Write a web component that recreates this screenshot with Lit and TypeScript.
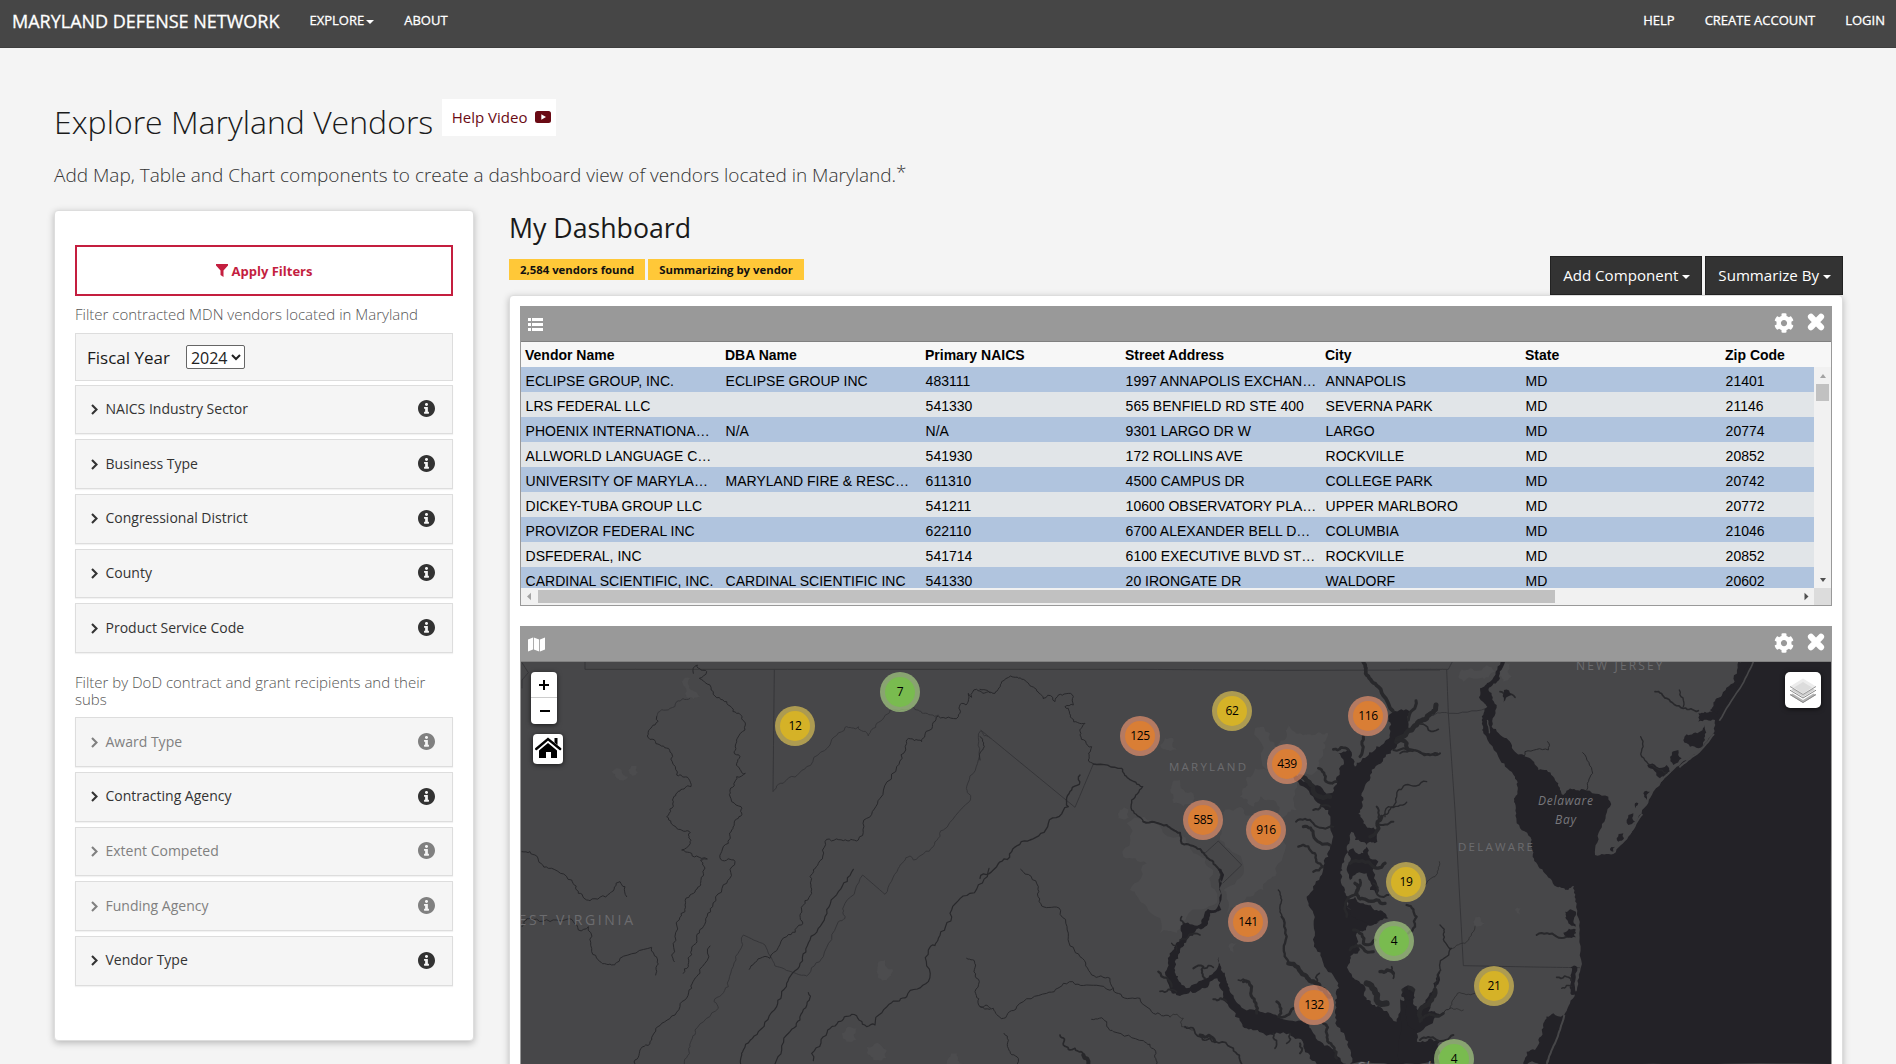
import { LitElement, html, svg, css } from "lit";
import { customElement, property } from "lit/decorators.js";
import { classMap } from "lit/directives/class-map.js";
import { styleMap } from "lit/directives/style-map.js";

type Pt = [number, number];

/** Parses "x,y x,y ..." into points. */
const parse = (s: string): Pt[] =>
  s.trim().split(/\s+/).map((p) => p.split(",").map(Number) as Pt);

/** Subdivides a polyline with small deterministic offsets, so rivers and shores look natural. */
function rough(src: string, amp: number, closed = false): string {
  let seed = 7;
  const rnd = () => {
    seed = (seed * 16807) % 2147483647;
    return seed / 2147483647 - 0.5;
  };
  let pts = parse(src);
  if (closed) pts.push(pts[0]);
  for (let pass = 0; pass < 3; pass++) {
    const out: Pt[] = [pts[0]];
    for (let i = 1; i < pts.length; i++) {
      const [ax, ay] = pts[i - 1];
      const [bx, by] = pts[i];
      const len = Math.hypot(bx - ax, by - ay);
      if (len > 9) {
        const k = rnd() * Math.min(amp, len * 0.55);
        out.push([(ax + bx) / 2 - ((by - ay) / len) * k, (ay + by) / 2 + ((bx - ax) / len) * k]);
      }
      out.push([bx, by]);
    }
    pts = out;
  }
  return "M" + pts.map((p) => `${p[0].toFixed(1)} ${p[1].toFixed(1)}`).join("L") + (closed ? "Z" : "");
}

const river = (s: string, w = 3, amp = 14) =>
  svg`<path class="river" d=${rough(s, amp)} stroke-width=${w}></path>`;
const border = (s: string, amp = 0) => svg`<path class="border" d=${rough(s, amp)}></path>`;
const water = (s: string, amp = 14) => svg`<path class="water" d=${rough(s, amp, true)}></path>`;
const urban = (s: string) => svg`<path class="urban" d=${rough(s, 50, true)}></path>`;
const land = (s: string, w = 5) => svg`<path class="land" d=${rough(s, 3)} stroke-width=${w}></path>`;

const icons = {
  cog: svg`<path d="M487.4 315.7l-42.6-24.6c4.3-23.2 4.3-47 0-70.2l42.6-24.6c4.9-2.8 7.1-8.6 5.5-14-11.1-35.6-30-67.8-54.7-94.6-3.8-4.1-10-5.1-14.8-2.3L380.8 110c-17.9-15.4-38.5-27.3-60.8-35.1V25.8c0-5.6-3.9-10.5-9.4-11.7-36.7-8.2-74.3-7.8-109.2 0-5.5 1.2-9.4 6.1-9.4 11.7V75c-22.2 7.9-42.8 19.8-60.8 35.1L88.7 85.5c-4.9-2.8-11-1.9-14.8 2.3-24.7 26.7-43.6 58.9-54.7 94.6-1.7 5.4.6 11.2 5.5 14L67.3 221c-4.3 23.2-4.3 47 0 70.2l-42.6 24.6c-4.9 2.8-7.1 8.6-5.5 14 11.1 35.6 30 67.8 54.7 94.6 3.8 4.1 10 5.1 14.8 2.3l42.6-24.6c17.9 15.4 38.5 27.3 60.8 35.1v49.2c0 5.6 3.9 10.5 9.4 11.7 36.7 8.2 74.3 7.8 109.2 0 5.5-1.2 9.4-6.1 9.4-11.7v-49.2c22.2-7.9 42.8-19.8 60.8-35.1l42.6 24.6c4.9 2.8 11 1.9 14.8-2.3 24.7-26.7 43.6-58.9 54.7-94.6 1.5-5.5-.7-11.3-5.6-14.1zM256 336c-44.1 0-80-35.9-80-80s35.9-80 80-80 80 35.9 80 80-35.9 80-80 80z"/>`,
  info: svg`<path d="M256 8C119.043 8 8 119.083 8 256c0 136.997 111.043 248 248 248s248-111.003 248-248C504 119.083 392.957 8 256 8zm0 90c26 0 44 18 44 42s-18 42-44 42-44-18-44-42 18-42 44-42zm72 296c0 7-5 12-12 12H196c-7 0-12-5-12-12v-32c0-7 5-12 12-12h20v-84h-20c-7 0-12-5-12-12v-32c0-7 5-12 12-12h88c7 0 12 5 12 12v128h20c7 0 12 5 12 12v32z"/>`,
};

const cogIcon = () => html`<svg class="cog" viewBox="0 0 512 512">${icons.cog}</svg>`;
const closeIcon = () => html`<svg class="close" viewBox="0 0 18 18">
  <path d="M4 3.8 14 14.2M14 3.8 4 14.2" stroke="#fff" stroke-width="6.200" stroke-linecap="round"></path>
</svg>`;

@customElement("filter-item")
class FilterItem extends LitElement {
  @property() label = "";
  @property({ type: Boolean }) off = false;

  static styles = css`
    :host { display: block; }
    .item {
      box-sizing: border-box; height: 49.7px; border: 1px solid #ddd; background: #f5f5f5;
      display: flex; align-items: center; padding: 0 17.5px 1px 15px; color: #333;
      font: 14px/20px "Open Sans", sans-serif; box-shadow: 0 1px 1px rgba(0, 0, 0, 0.05);
    }
    .off { color: #808080; }
    .chev { width: 7px; height: 11px; margin: 1px 8px 0 -0.5px; fill: none; stroke: currentColor; stroke-width: 2.1; }
    .label { flex: 1; }
    .info { width: 17px; height: 17px; fill: currentColor; }
  `;

  render() {
    return html`<div class=${classMap({ item: true, off: this.off })}>
      <svg class="chev" viewBox="0 0 7 11"><path d="M1 1 5.5 5.5 1 10"></path></svg>
      <span class="label">${this.label}</span>
      <svg class="info" viewBox="8 8 496 496">${icons.info}</svg>
    </div>`;
  }
}

const COLUMNS = ["Vendor Name", "DBA Name", "Primary NAICS", "Street Address", "City", "State", "Zip Code"];
const ROWS: string[][] = [
  ["ECLIPSE GROUP, INC.", "ECLIPSE GROUP INC", "483111", "1997 ANNAPOLIS EXCHAN…", "ANNAPOLIS", "MD", "21401"],
  ["LRS FEDERAL LLC", "", "541330", "565 BENFIELD RD STE 400", "SEVERNA PARK", "MD", "21146"],
  ["PHOENIX INTERNATIONA…", "N/A", "N/A", "9301 LARGO DR W", "LARGO", "MD", "20774"],
  ["ALLWORLD LANGUAGE C…", "", "541930", "172 ROLLINS AVE", "ROCKVILLE", "MD", "20852"],
  ["UNIVERSITY OF MARYLA…", "MARYLAND FIRE & RESC…", "611310", "4500 CAMPUS DR", "COLLEGE PARK", "MD", "20742"],
  ["DICKEY-TUBA GROUP LLC", "", "541211", "10600 OBSERVATORY PLA…", "UPPER MARLBORO", "MD", "20772"],
  ["PROVIZOR FEDERAL INC", "", "622110", "6700 ALEXANDER BELL D…", "COLUMBIA", "MD", "21046"],
  ["DSFEDERAL, INC", "", "541714", "6100 EXECUTIVE BLVD ST…", "ROCKVILLE", "MD", "20852"],
  ["CARDINAL SCIENTIFIC, INC.", "CARDINAL SCIENTIFIC INC", "541330", "20 IRONGATE DR", "WALDORF", "MD", "20602"],
];

@customElement("vendor-table")
class VendorTable extends LitElement {
  static styles = css`
    :host { display: block; font: 14px/25px "Liberation Sans", Arial, sans-serif; color: #000; }
    .row { display: grid; grid-template-columns: repeat(6, 200px) 1fr; height: 25px; padding-left: 4.6px; white-space: nowrap; }
    .head { background: #f7f7f7; font-weight: 700; padding-left: 4px; line-height: 27px; }
    .main { display: grid; grid-template-columns: 1fr 17px; grid-template-rows: 221px 17px; }
    .rows { overflow: hidden; }
    .rows .row { background: #e1e5e8; line-height: 29px; }
    .rows .row:nth-child(odd) { background: #b0c4de; }
    .bar { background: #f1f1f1; display: flex; }
    .v { flex-direction: column; align-items: center; }
    .h { align-items: center; }
    .corner { background: #dcdcdc; }
    .thumb { background: #c1c1c1; }
    .v .thumb { width: 13px; height: 17px; }
    .h .thumb { height: 13px; width: 1017px; }
    .arrow { width: 17px; height: 17px; fill: #505050; flex: none; }
    .dim { fill: #a3a3a3; }
    .space { flex: 1; }
  `;

  render() {
    return html`
      <div class="row head">${COLUMNS.map((c) => html`<span>${c}</span>`)}</div>
      <div class="main">
        <div class="rows">
          ${ROWS.map((r) => html`<div class="row">${r.map((c) => html`<span>${c}</span>`)}</div>`)}
        </div>
        <div class="bar v">
          <svg class="arrow dim" viewBox="0 0 17 17"><path d="M6 11h6L9 7z"></path></svg>
          <div class="thumb"></div>
          <div class="space"></div>
          <svg class="arrow" viewBox="0 0 17 17"><path d="M6 7h6L9 11z"></path></svg>
        </div>
        <div class="bar h">
          <svg class="arrow dim" viewBox="0 0 17 17"><path d="M10 4.800v7.400L6 8.500z"></path></svg>
          <div class="thumb"></div>
          <div class="space"></div>
          <svg class="arrow" viewBox="0 0 17 17"><path d="M7.500 4.800v7.400L11.500 8.500z"></path></svg>
        </div>
        <div class="corner"></div>
      </div>
    `;
  }
}

/** Offset of the map viewport on the drawing grid. */
const MAP_X = 521;
const MAP_Y = 662;

const CLUSTERS: { n: number; x: number; y: number }[] = [
  { n: 12, x: 795, y: 726 },
  { n: 7, x: 900, y: 692 },
  { n: 125, x: 1140, y: 736 },
  { n: 62, x: 1232, y: 711 },
  { n: 116, x: 1368, y: 716 },
  { n: 439, x: 1287, y: 764 },
  { n: 585, x: 1203, y: 820 },
  { n: 916, x: 1266, y: 830 },
  { n: 141, x: 1248, y: 922 },
  { n: 132, x: 1314, y: 1005 },
  { n: 19, x: 1406, y: 882 },
  { n: 4, x: 1394, y: 941 },
  { n: 21, x: 1494, y: 986 },
  { n: 4, x: 1454, y: 1059 },
];

@customElement("vendor-map")
class VendorMap extends LitElement {
  static styles = css`
    :host { display: block; position: relative; height: 440px; background: #474749; overflow: hidden; }
    .canvas { display: block; width: 1310px; height: 440px; }
    .river { fill: none; stroke: #28282b; stroke-linejoin: round; stroke-linecap: round; }
    .border { fill: none; stroke: #353538; stroke-width: 3; }
    .water { fill: #232227; }
    .urban { fill: #4c4c4e; }
    .land { fill: none; stroke: #474749; }
    .name { fill: #6c6c6f; font-family: "Open Sans", sans-serif; }
    .sea { fill: #78787c; font-style: italic; }
    .cluster {
      position: absolute; width: 40px; height: 40px; margin: -20px 0 0 -20px; border-radius: 50%;
      display: grid; place-items: center; background: rgba(253, 156, 115, 0.6);
    }
    .disc {
      width: 30px; height: 30px; border-radius: 50%; background: rgba(241, 128, 23, 0.6);
      font: 12px/30px "Open Sans", sans-serif; letter-spacing: -0.3px; text-align: center; color: #000;
    }
    .medium { background: rgba(241, 211, 87, 0.6); }
    .medium .disc { background: rgba(240, 194, 12, 0.6); }
    .small { background: rgba(181, 226, 140, 0.6); }
    .small .disc { background: rgba(110, 204, 57, 0.6); }
    .control { position: absolute; background: #fff; border-radius: 4px; box-shadow: 0 1px 5px rgba(0, 0, 0, 0.65); }
    .zoom { left: 10px; top: 10px; width: 26px; height: 52px; }
    .home { left: 12px; top: 72px; width: 30px; height: 30px; }
    .layers { right: 10px; top: 10px; width: 36px; height: 36px; border-radius: 5px; }
    .control svg { display: block; }
  `;

  private west() {
    return svg`<g transform="translate(510 610) scale(.33333)">
      ${urban("515,215 540,205 545,240 570,260 530,262")}
      ${urban("305,485 335,480 355,500 340,512 320,505")}
      ${urban("355,480 380,468 384,488 368,498")}
      ${urban("1100,1085 1125,1050 1150,1080 1130,1110 1105,1105")}
      ${urban("995,1270 1040,1255 1040,1290 1010,1295")}
      ${urban("1070,1310 1130,1320 1130,1345 1090,1350")}
      ${urban("1315,1345 1340,1330 1360,1362 1310,1362")}
      ${border("225,155 225,178 1440,178")}
      ${border("36,158 55,188 36,210 36,235")}
      ${border("793,178 789,545")}
      ${border("789,545 830,510 890,470 960,405 1005,352 1045,350 1075,378 1100,340 1140,300 1210,290 1240,310 1285,315", 12)}
      ${border("1440,385 1412,362 1405,450 1370,530 1378,575 1300,660 1270,710 1210,750 1200,738 1165,775 1125,853", 10)}
      ${border("1125,853 1058,795")}
      ${border("1058,795 1005,880 1005,925 985,935 940,1040 890,1098", 10)}
      ${border("890,1098 850,1088 795,1068 765,1005 700,975", 3)}
      ${border("700,975 678,1050 655,1130 612,1175 625,1195 555,1260 540,1310 523,1362", 10)}
      ${border("440,320 480,295 500,275 540,265", 20)}
      ${river("550,190 562,165 590,185 568,205 610,245 650,275 680,310 706,345 705,360 682,385 672,425 690,440 680,460 706,490 680,500 660,540 665,575 693,590 685,625 665,660 655,700 635,725 632,748 675,755 650,820 608,890 580,950 560,990 545,1020 535,1070 520,1090")}
      ${river("440,320 435,345 412,378 450,405 485,430 500,495 535,505 543,530 510,543 490,575 470,620 500,655 541,668 541,700 515,720 560,738 592,747 572,750 580,790 572,825 540,855 525,905 500,945 485,1035 493,1055")}
      ${river("36,725 80,738 115,775 185,810 205,850 240,872 300,850 330,815 345,830 350,860")}
      ${river("36,950 60,925 140,930 190,935 205,960 235,950 245,1025 265,1050 305,1065 330,1045 425,1012 443,1050 437,1095")}
      ${river("600,1008 570,1090 545,1135 510,1190 455,1240 425,1290 390,1320 375,1362")}
      ${river("1440,248 1400,238 1385,262 1375,250 1368,285 1355,280 1345,320 1285,318 1260,360 1235,395 1190,390 1190,400 1160,470 1110,565 1070,625 1045,690 1000,692 945,695 925,760 900,800 905,850 875,900 875,945 830,980 780,1045 750,1045 718,1078")}
      ${river("1030,778 985,845 945,920 900,990 870,1060 830,1120 800,1190 745,1265 700,1320 692,1362", 3.5, 10)}
      ${river("895,1148 898,1170 870,1230 830,1275 795,1362", 3.5, 10)}
      ${river("1437,775 1380,850 1320,910 1285,985 1255,1020 1255,1115 1190,1160 1145,1178 1095,1245 1070,1250 1025,1213 985,1235 940,1280 910,1352", 3.5, 22)}
      ${river("1370,1045 1397,1065 1408,1115 1395,1145 1410,1190 1440,1198")}
    </g>`;
  }

  private bay() {
    return svg`<g transform="translate(980 650) scale(.33333)">
      ${urban("825,235 870,250 890,290 920,260 925,225 960,250 1000,255 1045,250 1030,310 1015,360 960,390 950,480 900,500 880,450 840,440 820,470 780,440 800,380 860,360")}
      ${urban("720,520 780,470 830,500 900,560 890,670 850,720 800,740 740,790 730,720 790,645 720,570")}
      ${urban("440,520 540,530 600,560 640,610 700,660 710,760 620,800 590,850 540,850 490,760 450,720 500,640 430,620")}
      ${urban("570,420 600,390 640,430 640,460 580,460")}
      ${urban("540,285 580,265 590,300 550,298")}
      ${urban("420,480 445,478 450,505 415,505")}
      ${urban("745,890 770,880 760,910")}
      ${border("0,58 480,58 900,61 1380,60")}
      ${border("2,240 285,472 340,342")}
      ${border("672,612 715,573 785,645 728,700")}
      ${river("0,118 45,130 65,95 92,78 130,88 165,115 190,145", 3, 5)}
      ${river("190,145 218,142 225,155 235,135 280,140 280,165 255,170 275,205 315,220 300,255 335,290 325,330 340,342", 3, 22)}
      ${river("340,342 425,355 445,385 488,410 455,450 455,480 490,515", 4, 6)}
      ${river("490,515 560,525 600,548 605,580 660,597 690,630 722,660 720,700", 6, 6)}
      ${river("300,375 275,420 265,470 205,520 150,570 95,605 50,650 0,685", 4, 24)}
      ${river("0,260 8,300 0,330")}
      ${river("122,658 175,710 185,768 242,782 265,860 300,920 335,975 390,985 400,1015 450,1045 480,1045 520,1090 570,1100")}
      ${river("0,1070 40,1075 70,1105 110,1070 200,1030 250,1000 320,1005 400,1015")}
      ${river("570,1100 610,1105 605,1130 640,1140", 2, 20)}
      ${river("615,1130 650,1155 690,1165 760,1195 785,1242", 5, 22)}
      ${river("660,1155 705,1175", 9, 20)}
      ${river("335,1108 380,1115 400,1145 490,1172 525,1200 530,1242")}
      ${river("72,1150 85,1195 115,1225 112,1242")}
      ${river("240,1155 250,1185 285,1195 315,1222 325,1242", 5, 24)}
      ${river("310,1215 325,1242", 12, 10)}
      ${water("714,660 724,660 724,780 690,790 670,835 625,860 600,900 585,950 595,990 620,1015 680,985 712,955 718,920 724,955 738,985 748,1020 780,1065 840,1085 900,1105 975,1115 1000,1150 1050,1190 1100,1242 1010,1242 970,1190 930,1150 850,1150 800,1135 765,1100 720,1050 730,1040 712,985 660,1020 605,1035 570,1020 560,960 575,905 600,870 610,815 665,820 675,785 713,770")}
      ${river("535,965 575,1010", 7)}
      ${river("540,1024 590,1026", 5)}
      ${river("575,880 590,900", 4)}
      ${river("600,870 660,855", 5, 20)}
      ${river("610,820 605,800", 5)}
      ${river("675,985 670,950 640,955", 6)}
      ${river("672,955 700,952", 5)}
      ${river("790,995 815,1010 828,1060 830,1090", 9, 20)}
      ${river("775,990 800,998", 5)}
      ${river("890,1055 895,1100 940,1075", 8, 22)}
      ${river("700,1048 740,1055", 6)}
      ${river("880,1150 885,1195", 5, 14)}
      ${river("930,1150 920,1180", 5, 14)}
      ${river("960,1180 960,1210", 6, 14)}
      ${river("1030,1120 1040,1150 1060,1190 1070,1225", 8, 20)}
      ${river("895,720 903,760 905,800", 4, 8)}
      ${river("905,800 915,880 925,940", 7, 14)}
      ${river("925,940 975,975 1010,1000 1050,1040", 13, 14)}
      ${river("1010,1000 1018,970", 5)}
      ${water("1238,185 1290,185 1285,230 1250,290 1210,325 1170,375 1145,430 1140,480 1150,520 1190,540 1192,575 1160,585 1125,570 1114,545 1100,590 1085,650 1082,690 1095,720 1100,760 1120,790 1185,800 1200,815 1160,830 1130,850 1140,900 1110,930 1105,960 1130,990 1155,1010 1160,1050 1200,1070 1250,1115 1275,1060 1265,1040 1285,1010 1303,1030 1300,1055 1320,1085 1345,1040 1360,1000 1380,960 1380,990 1345,1085 1380,1095 1310,1150 1310,1178 1380,1175 1380,1242 1110,1242 1105,1175 1070,1110 1065,1050 1075,1000 1030,940 1003,880 1000,790 980,740 1020,680 1045,620 1060,560 1045,480 1000,440 940,380 990,395 1050,430 1070,380 1090,345 1075,310 1105,295 1125,350 1160,320 1205,285 1230,250 1225,200")}
      ${water("1105,615 1120,595 1150,610 1160,590 1165,615 1195,635 1180,665 1195,740 1170,720 1160,670 1130,670 1110,690 1100,660", 22)}
      ${water("1100,770 1125,740 1150,760 1190,780 1225,805 1180,825 1130,810", 22)}
      ${river("1150,36 1160,75 1195,110 1238,182", 11, 6)}
      ${river("1308,152 1298,180 1285,210", 9, 8)}
      ${river("1368,165 1340,205 1300,232 1250,275", 15, 12)}
      ${river("1380,310 1320,308 1240,300", 6, 14)}
      ${river("1320,222 1345,240 1375,238", 5, 12)}
      ${river("1250,270 1280,280 1285,300", 12, 8)}
      ${river("1340,395 1275,405 1250,440 1240,470 1205,500", 4, 16)}
      ${river("1205,500 1170,560", 11, 20)}
      ${river("1280,457 1225,470 1215,500", 4, 12)}
      ${river("1190,470 1190,520 1240,515", 6, 14)}
      ${river("1150,260 1140,320", 9, 10)}
      ${river("1060,298 1105,300", 8, 14)}
      ${river("1015,355 1035,390 1070,395", 8, 16)}
      ${river("960,380 1000,425 1050,440", 14, 20)}
      ${river("1000,480 1050,470", 6, 18)}
      ${river("948,515 1000,520 1060,530", 6, 22)}
      ${river("970,530 1000,555 1050,585", 9, 22)}
      ${river("955,590 1005,610 1030,650 1000,665", 7, 24)}
      ${river("1180,700 1190,730 1225,735", 6, 20)}
      ${river("1125,700 1130,730 1160,750 1215,760", 10, 26)}
      ${river("1110,640 1180,650 1215,640", 10, 26)}
      ${river("1140,690 1110,740 1100,800", 8, 22)}
      ${river("1120,840 1150,880 1185,870", 9, 26)}
      ${river("1110,900 1150,895 1180,905", 9, 26)}
      ${river("1280,765 1310,800 1305,830 1285,850", 7, 14)}
      ${river("1200,965 1240,970", 10, 16)}
      ${river("1235,950 1240,985", 5, 6)}
      ${river("1160,1000 1190,1050 1220,1060", 18, 20)}
      ${river("1270,1020 1300,1020", 12, 16)}
    </g>`;
  }

  private coast() {
    return svg`<g transform="translate(1400 610) scale(.33333)">
      ${urban("175,200 210,175 260,165 285,185 240,205 190,215")}
      ${urban("300,175 330,160 335,200 310,215")}
      ${urban("220,935 240,920 255,940 230,950")}
      ${urban("345,900 362,895 360,915")}
      ${border("0,178 145,178 157,155")}
      ${border("140,178 145,310 165,600 190,1067 400,1071 540,1073")}
      ${border("258,295 145,310 95,315", 8)}
      ${water("1045,155 1295,155 1295,1362 440,1362 465,1300 495,1210 525,1150 542,1075 538,970 530,880 522,828 505,840 470,830 430,785 398,740 395,690 350,640 345,580 352,545 345,500 300,450 250,370 245,330 262,290 237,262 240,235 270,215 302,155 315,155 300,205 265,240 290,285 275,350 320,385 350,430 390,445 415,480 440,480 475,520 490,555 505,540 550,538 625,560 630,590 600,660 585,735 640,732 685,680 725,610 760,545 830,470 890,432 940,370 945,330 895,335 895,310 935,305 955,265 1000,220 1030,155", 7)}
      ${land("1060,155 1020,235 958,332", 5)}
      ${land("262,330 268,370", 4)}
      ${water("1015,155 1055,155 1020,220 985,265 950,312 930,300 950,265 1000,225")}
      ${water("850,390 880,370 915,345 915,390 895,415 870,410", 18)}
      ${water("810,440 835,420 845,445 820,465", 14)}
      ${water("742,465 770,470 800,465 810,485 780,505")}
      ${water("730,550 750,545 740,570")}
      ${water("680,630 700,610 705,635 685,645")}
      ${water("650,685 670,670 672,685 655,695")}
      ${water("705,580 715,580 710,600")}
      ${water("630,720 645,710 640,725")}
      ${land("838,472 890,432 942,372", 6)}
      ${land("775,520 812,485", 5)}
      ${land("690,670 727,612", 6)}
      ${river("765,245 800,265 850,295 895,302", 5, 10)}
      ${river("722,380 725,440 770,475 800,490", 4, 12)}
      ${river("838,240 850,290", 4, 10)}
      ${river("300,245 345,262", 5, 10)}
      ${water("312,240 335,255 310,278")}
      ${river("548,428 578,490 560,540", 3, 8)}
      ${river("442,395 445,420 375,425 372,440", 3, 10)}
      ${river("118,755 105,800 75,825", 2, 8)}
      ${river("120,945 130,975 155,1015 120,1060 115,1100 105,1140", 4, 16)}
      ${river("105,1140 70,1190 62,1230", 14, 18)}
      ${river("60,1235 100,1215 130,1210", 8, 18)}
      ${river("225,950 195,1000 158,1015", 2, 8)}
      ${river("225,1150 172,1150 150,1195 190,1200", 2, 8)}
      ${river("150,1195 110,1215", 3, 8)}
      ${river("0,430 60,425 112,430", 5, 10)}
      ${river("410,975 470,980 525,968", 6, 16)}
      ${water("495,905 528,905 527,950 505,940")}
      ${water("490,968 527,958 528,982 500,980")}
      ${water("512,1072 532,1072 530,1150 515,1155 510,1110", 12)}
      ${river("470,1102 515,1110", 5, 16)}
      ${river("485,1135 515,1130", 4, 12)}
      ${water("10,1145 22,1128 42,1150 35,1168 15,1170")}
      ${water("0,1165 20,1190 30,1250 50,1270 50,1295 100,1290 100,1362 0,1362")}
      ${river("60,1290 110,1290 160,1275", 6, 18)}
      ${water("430,1240 460,1210 490,1215 465,1300 440,1362 370,1362 380,1325 405,1320 415,1290", 16)}
      ${land("493,1215 465,1300 440,1362", 6)}
    </g>`;
  }

  private size(n: number) {
    return n < 10 ? "small" : n < 100 ? "medium" : "large";
  }

  render() {
    return html`
      <svg class="canvas" viewBox="521 662 1310 440">
        ${this.west()} ${this.bay()} ${this.coast()}
        <g class="name">
          <text x="503" y="925" font-size="14" textLength="130">WEST VIRGINIA</text>
          <text x="1169" y="771" font-size="11.5" textLength="77">MARYLAND</text>
          <text x="1458" y="851" font-size="11.5" textLength="75">DELAWARE</text>
          <text x="1576" y="670" font-size="12" textLength="86.500">NEW JERSEY</text>
          <g class="sea">
            <text x="1538" y="805" font-size="12" textLength="55">Delaware</text>
            <text x="1555" y="824" font-size="12" textLength="21">Bay</text>
            <text x="1356" y="1072" font-size="14" textLength="86">Chesapeake</text>
          </g>
        </g>
      </svg>
      ${CLUSTERS.map(
        (c) => html`<div
          class="cluster ${this.size(c.n)}"
          style=${styleMap({ left: `${c.x - MAP_X}px`, top: `${c.y - MAP_Y}px` })}
        ><div class="disc">${c.n}</div></div>`
      )}
      <div class="control zoom">
        <svg width="26" height="52" viewBox="0 0 26 52">
          <path d="M0 25.500h26" stroke="#ccc"></path>
          <path d="M8 13h10M13 8v10M9 39h10" stroke="#000" stroke-width="2"></path>
        </svg>
      </div>
      <div class="control home">
        <svg width="30" height="30" viewBox="0 0 30 30">
          <path d="M3.200 15 15 5 27.200 15" fill="none" stroke="#000" stroke-width="2.400" stroke-linecap="round"></path>
          <path d="M21.500 4h3v7l-3-2.500zM15 9l9 7.500V24h-6v-6h-5v6H6v-7.500z"></path>
        </svg>
      </div>
      <div class="control layers">
        <svg width="36" height="36" viewBox="0 0 36 36">
          <path d="M5 23 18 15l13 8-13 8z" fill="#b4b4b4"></path>
          <path d="M5 22.500 18 30.500l13-8" fill="none" stroke="#8a8a8a"></path>
          <path d="M5 18.500 18 11l13 7.500-13 8z" fill="#d0d0d0"></path>
          <path d="M5 18.500 18 26.500l13-8" fill="none" stroke="#fff" stroke-width="2.500"></path>
          <path d="M5 18.200 18 26l13-7.800" fill="none" stroke="#8a8a8a"></path>
          <path d="M5 14.500 18 6.500l13 8-13 8z" fill="#ececec"></path>
          <path d="M9 15.500 18 10l9 5.500-9 6z" fill="#dcdcdc"></path>
          <path d="M5 14.500 18 22.500l13-8" fill="none" stroke="#999"></path>
        </svg>
      </div>
    `;
  }
}

@customElement("app-root")
class AppRoot extends LitElement {
  static styles = css`
    :host {
      display: block; height: 1064px; overflow: hidden; background: #f4f4f4;
      font-family: "Open Sans", sans-serif; color: #1a1a1a;
    }
    .nav {
      box-sizing: border-box; height: 48px; background: #464646; border-bottom: 1px solid #3e3e3e; color: #fff;
      display: flex; padding: 0 11px 0 12px; font-size: 13px; line-height: 41px; -webkit-text-stroke: 0.3px #fff;
    }
    .brand { font-size: 18px; line-height: 43px; margin-right: 30px; }
    .explore { margin-right: 30.5px; }
    .caret { display: inline-block; border: 4px solid transparent; border-top-color: currentColor; border-bottom: 0; vertical-align: middle; margin-left: 1.5px; }
    .right { margin-left: auto; display: flex; gap: 30px; }
    .intro { padding: 51px 0 0 54px; }
    .title-row { display: flex; align-items: flex-start; }
    h1 { margin: 1px 9px 0 0; font-size: 32px; line-height: 44px; font-weight: 300; white-space: nowrap; }
    .help {
      box-sizing: border-box; display: flex; align-items: center; gap: 7.500px; height: 37px; padding: 0 5px 2px 9.500px;
      background: #fff; color: #6a0a14; font-size: 15px; white-space: nowrap;
    }
    .tube { width: 16px; height: 12px; margin-top: 1px; }
    .lead { margin: 15px 0 0; font-size: 19px; line-height: 32px; font-weight: 300; color: #333; }
    sup { font-size: 19px; line-height: 0; vertical-align: 3px; }
    .cols { display: flex; margin-top: 19px; padding: 0 53px 0 54px; gap: 35px; align-items: flex-start; }
    .side {
      box-sizing: border-box; width: 420px; height: 831px; background: #fff; border: 1px solid #ddd; border-radius: 4px;
      box-shadow: 0 2px 7px rgba(0, 0, 0, 0.25); padding: 34px 20px 0; flex: none;
    }
    .apply {
      box-sizing: border-box; height: 51px; border: 2px solid #c41e3f; color: #c41e3f; font-size: 13px; font-weight: 700;
      display: flex; align-items: center; justify-content: center; gap: 4px;
    }
    .funnel { width: 12px; height: 13px; fill: currentColor; }
    .group { margin: 8px 0 7.500px; font-size: 15px; line-height: 17px; font-weight: 300; color: #555; padding: 2px 0; }
    .group2 { margin: 19.500px 0 6.800px; }
    .year {
      box-sizing: border-box; height: 48px; border: 1px solid #ddd; background: #f5f5f5; display: flex; align-items: center;
      padding: 1px 11px 0; gap: 16px; font-size: 17px; margin-bottom: 4px;
    }
    select { width: 59px; height: 24px; font: 16px "Open Sans", sans-serif; padding: 0; color: #222; background: #fff; border: 1px solid #666; border-radius: 2px; }
    .items { display: grid; gap: 5px; }
    .dash { flex: 1; min-width: 0; }
    .dash-head { display: flex; justify-content: space-between; align-items: flex-end; height: 85px; }
    h2 { margin: 0 0 14px; font-size: 26.700px; line-height: 34px; font-weight: 400; }
    .badges { display: flex; gap: 3px; margin-bottom: 15px; }
    .badge { background: #ffc838; color: #111; font-size: 11.350px; font-weight: 700; line-height: 21px; padding: 0 11px; }
    .actions { display: flex; gap: 3px; }
    .btn {
      box-sizing: border-box; height: 39px; border: 1px solid #222; background: #333; color: #fff; font-size: 15.100px;
      line-height: 37px; padding: 0 11.500px 0 12px;
    }
    .btn .caret { border-width: 4px 4px 0; margin-left: 3.500px; }
    .card {
      box-sizing: border-box; height: 900px; background: #fff; border: 1px solid #ddd; border-radius: 4px;
      box-shadow: 0 2px 7px rgba(0, 0, 0, 0.25); padding: 10px 10px 0;
    }
    .widget { border: 1px solid #999; margin-bottom: 20px; }
    .bar {
      height: 34px; background: #999; border-bottom: 1px solid #808080; display: flex; align-items: center;
      padding: 0 6px 0 7px; gap: 13px;
    }
    .lead-icon { width: 18px; height: 15px; fill: #fff; margin: 1px auto 0 0; }
    .cog { width: 20px; height: 20px; fill: #fff; margin-top: -2px; }
    .close { width: 18px; height: 18px; margin-top: -4px; }
  `;

  private tools = () => html`${cogIcon()}${closeIcon()}`;

  render() {
    return html`
      <nav class="nav">
        <span class="brand">MARYLAND DEFENSE NETWORK</span>
        <span class="explore">EXPLORE<i class="caret"></i></span>
        <span>ABOUT</span>
        <div class="right"><span>HELP</span><span>CREATE ACCOUNT</span><span>LOGIN</span></div>
      </nav>
      <header class="intro">
        <div class="title-row">
          <h1>Explore Maryland Vendors</h1>
          <span class="help">Help Video
            <svg class="tube" viewBox="0 0 16 12">
              <rect width="16" height="12" rx="2.500" fill="#6a0a14"></rect>
              <path d="M6.300 3.300 11 6 6.300 8.700z" fill="#fff"></path>
            </svg>
          </span>
        </div>
        <p class="lead">Add Map, Table and Chart components to create a dashboard view of vendors located in Maryland.<sup>*</sup></p>
      </header>
      <main class="cols">
        <aside class="side">
          <div class="apply">
            <svg class="funnel" viewBox="0 0 12 13"><path d="M0 0h12v1.500L7.500 6.500V13L4.500 11V6.500L0 1.500z"></path></svg>
            Apply Filters
          </div>
          <div class="group">Filter contracted MDN vendors located in Maryland</div>
          <div class="year">Fiscal Year <select><option>2024</option></select></div>
          <div class="items">
            ${["NAICS Industry Sector", "Business Type", "Congressional District", "County", "Product Service Code"].map(
              (l) => html`<filter-item label=${l}></filter-item>`
            )}
          </div>
          <div class="group group2">Filter by DoD contract and grant recipients and their subs</div>
          <div class="items">
            <filter-item label="Award Type" off></filter-item>
            <filter-item label="Contracting Agency"></filter-item>
            <filter-item label="Extent Competed" off></filter-item>
            <filter-item label="Funding Agency" off></filter-item>
            <filter-item label="Vendor Type"></filter-item>
          </div>
        </aside>
        <section class="dash">
          <div class="dash-head">
            <div>
              <h2>My Dashboard</h2>
              <div class="badges">
                <span class="badge">2,584 vendors found</span><span class="badge">Summarizing by vendor</span>
              </div>
            </div>
            <div class="actions">
              <span class="btn">Add Component<i class="caret"></i></span>
              <span class="btn">Summarize By<i class="caret"></i></span>
            </div>
          </div>
          <div class="card">
            <div class="widget">
              <div class="bar">
                <svg class="lead-icon" viewBox="0 0 18 15">
                  <path d="M0 1h3v3H0zM4 1h11v3H4zM0 6h3v3H0zM4 6h11v3H4zM0 11h3v3H0zM4 11h11v3H4z"></path>
                </svg>
                ${this.tools()}
              </div>
              <vendor-table></vendor-table>
            </div>
            <div class="widget">
              <div class="bar">
                <svg class="lead-icon" viewBox="0 0 18 15">
                  <path d="M0 2.500 5 .5v12L0 14.500zM5.800.5l5.400 2v12l-5.400-2zM12 2.500l5-2v12l-5 2z"></path>
                </svg>
                ${this.tools()}
              </div>
              <vendor-map></vendor-map>
            </div>
          </div>
        </section>
      </main>
    `;
  }
}
